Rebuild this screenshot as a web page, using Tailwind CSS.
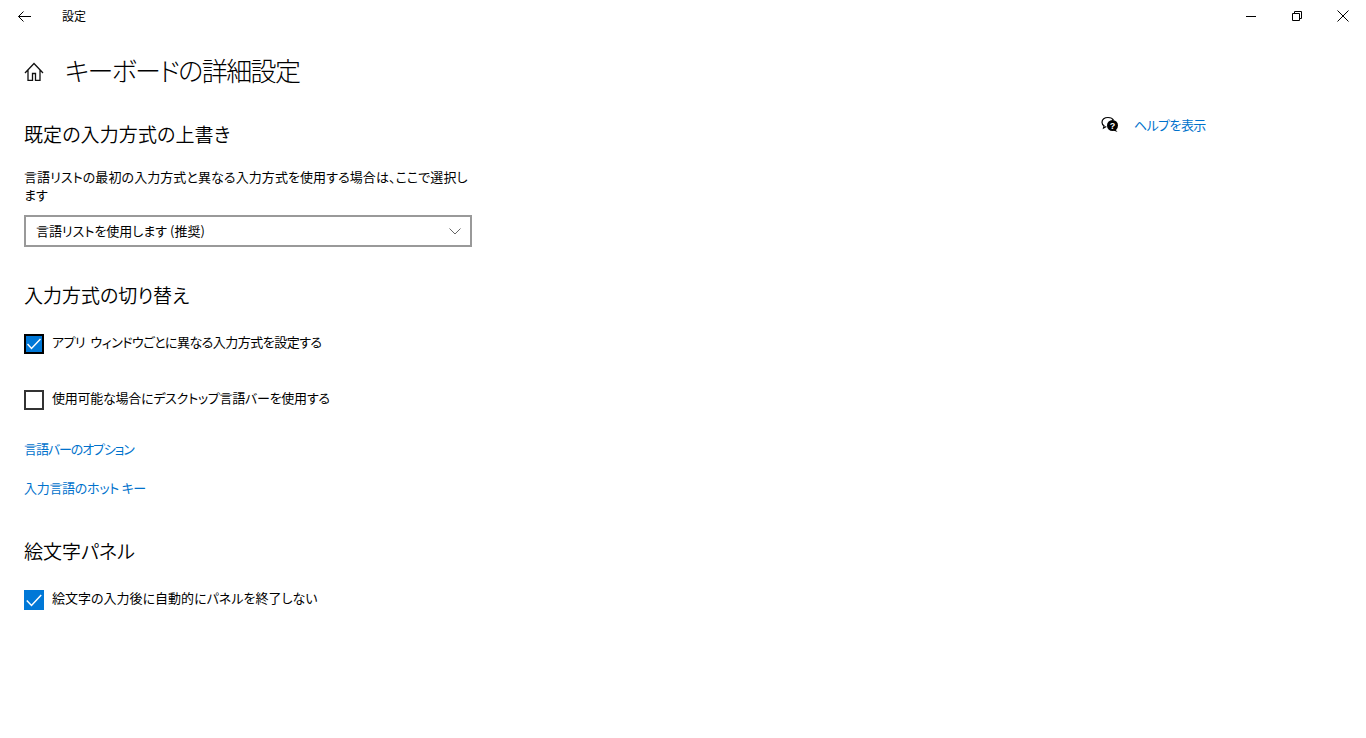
<!DOCTYPE html>
<html lang="ja">
<head>
    <meta charset="UTF-8">
    <title>設定</title>
    <script src="https://cdn.jsdelivr.net/npm/@tailwindcss/browser@4"></script>
</head>
<body class="bg-white text-black w-[1366px] h-[738px] overflow-hidden font-['Noto_Sans_CJK_JP',sans-serif] [font-feature-settings:'palt'] [font-kerning:normal]">
    <!-- title bar -->
    <header class="h-8 flex items-center">
        <button class="w-12 h-8 flex items-center justify-center">
            <svg width="14" height="14" viewBox="0 0 14 14" fill="none" stroke="#000" stroke-width="1"><path d="M1.500 7.500H14M6.500 2.500l-5 5 5 5"/></svg>
        </button>
        <span class="ml-[14px] text-xs leading-8">設定</span>
        <div class="ml-auto flex">
            <button class="w-[46px] h-8 flex items-center justify-center">
                <svg width="10" height="10" viewBox="0 0 10 10" stroke="#000" stroke-width="1"><path d="M0 5.500h10"/></svg>
            </button>
            <button class="w-[46px] h-8 flex items-center justify-center">
                <svg width="10" height="10" viewBox="0 0 10 10" fill="none" stroke="#000" stroke-width="1"><path d="M.5 2.500h7v7h-7zM2.500 2.500v-2h7v7h-2"/></svg>
            </button>
            <button class="w-[46px] h-8 flex items-center justify-center">
                <svg width="12" height="12" viewBox="0 0 12 12" fill="none" stroke="#000" stroke-width="1"><path d="M.5.500l11 11M11.500.500l-11 11"/></svg>
            </button>
        </div>
    </header>

    <div class="flex">
        <main class="w-[1100px] pl-6">
            <div class="flex items-center h-10 mt-[18px]">
                <svg width="20" height="22" viewBox="0 0 20 22" fill="none" stroke="#111" stroke-width="1.300"><path d="M1 14 10 4.500l9 9.500M4 11v10.500h4.500v-7h3v7H16V11"/></svg>
                <h1 class="ml-[21px] text-[26px] leading-10 font-light tracking-[-1.6px]">キーボードの詳細設定</h1>
            </div>

            <h2 class="mt-[30px] text-[19px] leading-7 font-[350] tracking-[0.1px]">既定の入力方式の上書き</h2>
            <p class="mt-[20px] w-[448px] text-[13px] leading-[18px] tracking-[0.08px]">言語リストの最初の入力方式と異なる入力方式を使用する場合は、ここで選択します</p>
            <div class="mt-[11px] w-[448px] h-8 border-2 border-[#999] flex items-center justify-between pl-[10px] pr-[9px]">
                <span class="text-[13px]">言語リストを使用します (推奨)</span>
                <svg width="12" height="7" viewBox="0 0 12 7" fill="none" stroke="#666" stroke-width="1"><path d="M.5.500 6 6 11.500.500"/></svg>
            </div>

            <h2 class="mt-[34px] text-[19px] leading-7 font-[350]">入力方式の切り替え</h2>
            <div class="mt-[25px] flex items-start gap-2 h-5">
                <span class="w-5 h-5 bg-[#0078d7] border-2 border-black flex items-center justify-center">
                    <svg width="14" height="12" viewBox="0 0 14 12" fill="none" stroke="#fff" stroke-width="1.500"><path d="M.5 6l4 4.500L13.500 1"/></svg>
                </span>
                <span class="text-[13px] leading-[15px] tracking-[-0.53px] [word-spacing:3px]">アプリ ウィンドウごとに異なる入力方式を設定する</span>
            </div>
            <div class="mt-9 flex items-start gap-2 h-5">
                <span class="w-5 h-5 border-2 border-[#333]"></span>
                <span class="text-[13px] leading-[15px] tracking-[-0.25px]">使用可能な場合にデスクトップ言語バーを使用する</span>
            </div>
            <a class="block mt-[29px] text-[13px] leading-5 tracking-[-1.100px] text-[#0072cc]">言語バーのオプション</a>
            <a class="block mt-[19px] text-[13px] leading-5 tracking-[-0.3px] text-[#0072cc]">入力言語のホット キー</a>

            <h2 class="mt-[39px] text-[19px] leading-7 font-[350]">絵文字パネル</h2>
            <div class="mt-[25px] flex items-start gap-2 h-5">
                <span class="w-5 h-5 bg-[#0078d7] flex items-center justify-center">
                    <svg width="16" height="13" viewBox="0 0 16 13" fill="none" stroke="#fff" stroke-width="1.500"><path d="M.8 6.500l4.700 5L15.200 1"/></svg>
                </span>
                <span class="text-[13px] leading-[15px]">絵文字の入力後に自動的にパネルを終了しない</span>
            </div>
        </main>

        <aside class="pt-[81px] pl-[1px]">
            <div class="flex items-center h-6">
                <svg width="18" height="18" viewBox="0 0 18 18">
                    <path d="M7 1.500C3.500 1.500 1 3.500 1 6.200c0 1.500.8 2.800 2 3.600L2.500 12l2.800-1.500" fill="none" stroke="#000" stroke-width="1.200"/>
                    <path d="M7 1.500c2.500 0 4.600 1 5.500 2.800" fill="none" stroke="#000" stroke-width="1.200"/>
                    <circle cx="11.500" cy="9.500" r="5.500" fill="#000"/>
                    <path d="M14 13l2.500 3-4-1.500z" fill="#000"/>
                    <text x="11.500" y="12.500" text-anchor="middle" font-size="9" font-weight="700" fill="#fff" font-family="Liberation Sans">?</text>
                </svg>
                <a class="ml-[15px] text-[13px] tracking-[-0.6px] text-[#0072cc]">ヘルプを表示</a>
            </div>
        </aside>
    </div>
</body>
</html>
